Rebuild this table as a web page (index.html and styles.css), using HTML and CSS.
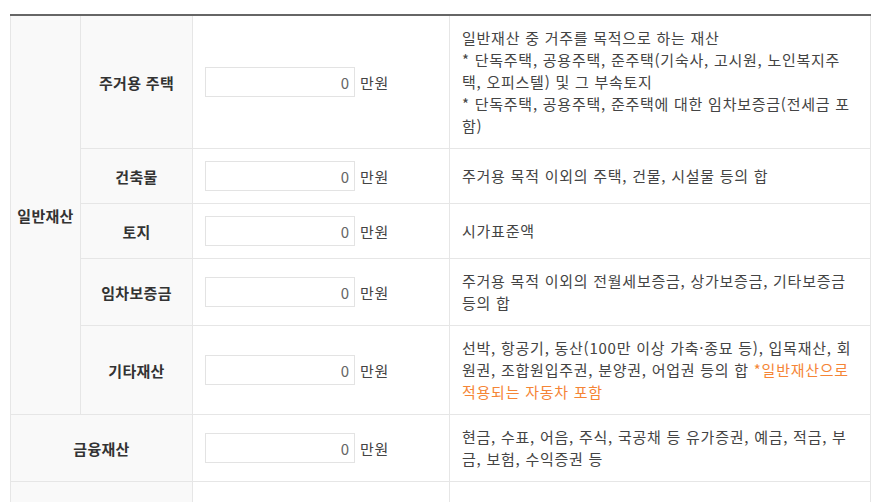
FILE: index.html
```html
<!DOCTYPE html>
<html lang="ko">
<head>
<meta charset="utf-8">
<link rel="stylesheet" href="styles.css">
</head>
<body>
<div class="wrap">
<table class="asset">
  <colgroup>
    <col class="c1"><col class="c2"><col class="c3"><col class="c4">
  </colgroup>
  <tbody>
    <tr>
      <th class="group" rowspan="5">일반재산</th>
      <th class="label">주거용 주택</th>
      <td class="field"><input class="num" type="text" value="0"><span class="unit">만원</span></td>
      <td class="desc">일반재산 중 거주를 목적으로 하는 재산<br>* 단독주택, 공용주택, 준주택(기숙사, 고시원, 노인복지주택, 오피스텔) 및 그 부속토지<br>* 단독주택, 공용주택, 준주택에 대한 임차보증금(전세금 포함)</td>
    </tr>
    <tr>
      <th class="label">건축물</th>
      <td class="field"><input class="num" type="text" value="0"><span class="unit">만원</span></td>
      <td class="desc">주거용 목적 이외의 주택, 건물, 시설물 등의 합</td>
    </tr>
    <tr>
      <th class="label">토지</th>
      <td class="field"><input class="num" type="text" value="0"><span class="unit">만원</span></td>
      <td class="desc">시가표준액</td>
    </tr>
    <tr>
      <th class="label">임차보증금</th>
      <td class="field"><input class="num" type="text" value="0"><span class="unit">만원</span></td>
      <td class="desc">주거용 목적 이외의 전월세보증금, 상가보증금, 기타보증금 등의 합</td>
    </tr>
    <tr>
      <th class="label">기타재산</th>
      <td class="field"><input class="num" type="text" value="0"><span class="unit">만원</span></td>
      <td class="desc">선박, 항공기, 동산(100만 이상 가축·종묘 등), 입목재산, 회원권, 조합원입주권, 분양권, 어업권 등의 합 <span class="note">*일반재산으로 적용되는 자동차 포함</span></td>
    </tr>
    <tr>
      <th class="label" colspan="2">금융재산</th>
      <td class="field"><input class="num" type="text" value="0"><span class="unit">만원</span></td>
      <td class="desc">현금, 수표, 어음, 주식, 국공채 등 유가증권, 예금, 적금, 부금, 보험, 수익증권 등</td>
    </tr>
    <tr class="row-car">
      <th class="label" colspan="2">자동차</th>
      <td class="field"><input class="num" type="text" value="0"><span class="unit">만원</span></td>
      <td class="desc">차량가액</td>
    </tr>
  </tbody>
</table>
</div>
</body>
</html>
```

FILE: styles.css
```css
html, body {
  margin: 0;
  padding: 0;
  background: #ffffff;
  overflow: hidden;
}
body {
  font-family: "Noto Sans CJK KR", "Noto Sans", sans-serif;
  font-size: 15px;
  letter-spacing: 0.75px;
  color: #444;
}
.wrap {
  padding: 14px 0 0 10px;
}
.asset {
  width: 860px;
  border-collapse: collapse;
  table-layout: fixed;
  border-top: 2px solid #666;
}
.c1 { width: 70px; }
.c2 { width: 112px; }
.c3 { width: 257px; }
.c4 { width: 421px; }
.asset th, .asset td {
  border: 1px solid #e6e6e6;
  vertical-align: middle;
}
.asset tr:first-child th, .asset tr:first-child td {
  border-top: none;
}
.group, .label {
  background: #f9f9f9;
  color: #333;
  font-weight: bold;
  text-align: center;
  padding: 0;
  letter-spacing: 0.3px;
}
.field {
  padding: 12px 12px;
  white-space: nowrap;
}
.num {
  box-sizing: border-box;
  width: 150px;
  height: 30px;
  border: 1px solid #e3e3e3;
  padding: 0 5px;
  margin: 0;
  font-family: "Noto Sans CJK KR", "Noto Sans", sans-serif;
  font-size: 15px;
  color: #666;
  text-align: right;
  vertical-align: middle;
  outline: none;
}
.unit {
  margin-left: 5px;
  vertical-align: middle;
  color: #444;
}
.desc {
  padding: 11px 16px 11px 12px;
  line-height: 22px;
  word-break: break-all;
}
.note {
  color: #f58536;
}
.row-car .field,
.row-car .desc {
  padding-top: 30px;
  padding-bottom: 30px;
}
```
